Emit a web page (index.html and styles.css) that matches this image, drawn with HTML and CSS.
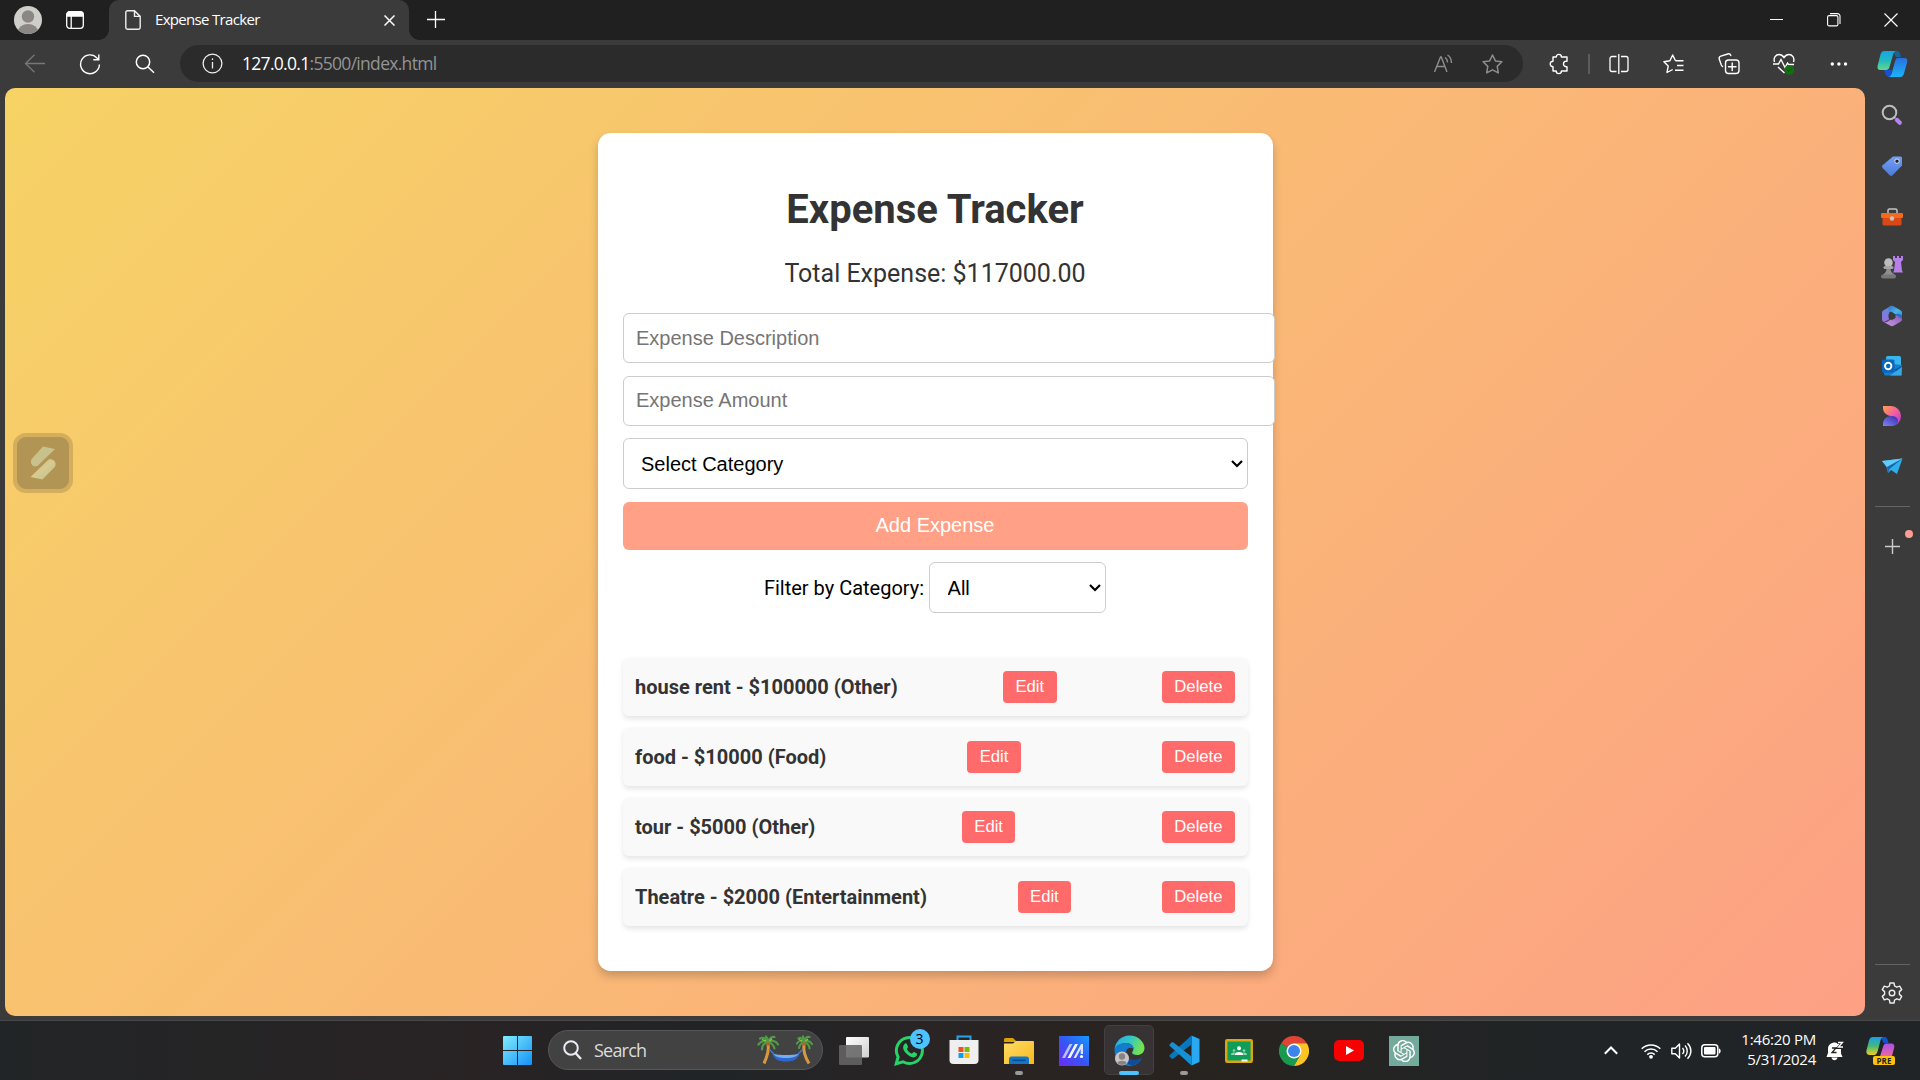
FILE: index.html
```html
<!DOCTYPE html>
<html lang="en">
<head>
<meta charset="utf-8">
<title>Expense Tracker</title>
<link rel="stylesheet" href="styles.css">
</head>
<body>
<div class="desktop">

  <header class="titlebar">
    <div class="cell profile"><svg width="28" height="28" viewBox="0 0 28 28"><defs><clipPath id="av"><circle cx="14" cy="14" r="14"/></clipPath></defs><g clip-path="url(#av)"><rect width="28" height="28" fill="#d0cecb"/><circle cx="14" cy="10.5" r="6.2" fill="#8b8784"/><ellipse cx="14" cy="25.500" rx="10" ry="7.500" fill="#8b8784"/></g></svg></div>
    <div class="cell workspaces"><svg width="18" height="18" viewBox="0 0 18 18" fill="none" stroke="#fff" stroke-width="1.300"><rect x=".7" y=".7" width="16.600" height="16.600" rx="3"/><path d="M1 3.500a2.500 2.500 0 0 1 2.500-2.500h11A2.500 2.500 0 0 1 17 3.500V5H1z" fill="#fff"/><path d="M5.200 5v12"/></svg></div>
    <div class="tab">
      <svg class="tab-icon" width="16" height="20" viewBox="0 0 16 20" fill="none" stroke="#eee" stroke-width="1.400"><path d="M2.500.8H9.500L15.200 6.400V17.500a1.700 1.700 0 0 1-1.700 1.700h-11A1.700 1.700 0 0 1 .8 17.500v-15A1.700 1.700 0 0 1 2.500.8zM9.500.8V6.400h5.700"/></svg>
      <span class="tab-title">Expense Tracker</span>
      <svg class="tab-close" width="11" height="11" viewBox="0 0 11 11" stroke="#fff" stroke-width="1.500"><path d="M.5.5l10 10M10.500.5l-10 10"/></svg>
    </div>
    <div class="cell newtab"><svg width="18" height="18" viewBox="0 0 18 18" stroke="#fff" stroke-width="1.300"><path d="M0 8.500h18M8.500 0v17"/></svg></div>
    <div class="window-controls">
      <svg width="14" height="14" viewBox="0 0 14 14" stroke="#fff"><path d="M0 6.500h13"/></svg>
      <svg width="14" height="14" viewBox="0 0 14 14" fill="none" stroke="#fff" stroke-width="1.100"><rect x=".6" y="2.600" width="10.300" height="10.300" rx="1.500"/><path d="M3 .6h7.500a2.500 2.500 0 0 1 2.500 2.500V11"/></svg>
      <svg width="14" height="14" viewBox="0 0 14 14" stroke="#fff" stroke-width="1.200"><path d="M.5.5l13 13M13.500.5l-13 13"/></svg>
    </div>
  </header>

  <nav class="toolbar">
    <div class="cell"><svg width="22" height="22" viewBox="0 0 22 22" fill="none" stroke="#777" stroke-width="1.300"><path d="M21 10.500H1.500M10.500 1.800L1.500 10.500l9 8.700"/></svg></div>
    <div class="cell"><svg width="22" height="22" viewBox="0 0 22 22" fill="none" stroke="#fff" stroke-width="1.400"><path d="M20.400 11.500A9.400 9.400 0 1 1 18 5l1.600 1.700M19.800 1.500v5.300h-5.500"/></svg></div>
    <div class="cell"><svg width="20" height="20" viewBox="0 0 20 20" fill="none" stroke="#fff" stroke-width="1.500"><circle cx="8" cy="8" r="6.700"/><path d="M13 13l6 5.800"/></svg></div>
    <div class="address">
      <svg class="info" width="21" height="21" viewBox="0 0 21 21" fill="none" stroke="#eee" stroke-width="1.300"><circle cx="10.500" cy="10.500" r="9.400"/><path d="M10.500 9v6.500"/><circle cx="10.500" cy="6.200" r=".6" fill="#eee" stroke="none"/><path d="M10.500 5.500v1.500"/></svg>
      <span class="url"><b>127.0.0.1</b>:5500/index.html</span>
      <svg class="read" width="22" height="20" viewBox="0 0 22 20" fill="none" stroke="#8d8d8d" stroke-width="1.400"><path d="M1.500 18L7.500 3h.8L14 18M3.700 12.500h8.200M12 3.500c1.700 1 2.500 2.800 2.500 5M14.500 1c2.800 1.700 4 4.500 4 8"/></svg>
      <svg class="fav" width="21" height="20" viewBox="0 0 21 20" fill="none" stroke="#8d8d8d" stroke-width="1.500" stroke-linejoin="round"><path d="M10.500 1l2.900 5.900 6.500.9-4.700 4.600 1.100 6.500-5.800-3.100-5.800 3.100 1.100-6.500L1.100 7.800l6.500-.9z"/></svg>
    </div>
    <div class="cell ext"><svg width="20" height="22" viewBox="0 0 20 22" fill="none" stroke="#fff" stroke-width="1.400" stroke-linejoin="round"><path d="M4 4h3.200a2.600 2.600 0 0 1 5.200 0H18v4.200a2.800 2.800 0 1 0 0 5.400V18h-5.600a2.600 2.600 0 0 1-5.200 0H4v-4.200a2.800 2.800 0 0 1 0-5.600z"/></svg></div>
    <div class="vsep"></div>
    <div class="cell"><svg width="20" height="20" viewBox="0 0 20 20" fill="none" stroke="#fff" stroke-width="1.300"><path d="M7.500 2.500H3a2 2 0 0 0-2 2v11a2 2 0 0 0 2 2h4.500M12 2.500h5a2 2 0 0 1 2 2v11a2 2 0 0 1-2 2h-5M9.800 0v20"/></svg></div>
    <div class="cell"><svg width="22" height="20" viewBox="0 0 22 20" fill="none" stroke="#fff" stroke-width="1.400" stroke-linejoin="round"><path d="M12.500 6.800L9.700 1 6.900 6.800.9 7.700l4.300 4.400L4 18.500l5.700-3M12.500 6.800H20.500M14 11.500h6.500M12 16.200h8.500"/></svg></div>
    <div class="cell"><svg width="22" height="22" viewBox="0 0 22 22" fill="none" stroke="#fff" stroke-width="1.400" stroke-linecap="round"><path d="M4.500 13.500A4 4 0 0 1 3.300 12L1.300 6.200a2.400 2.400 0 0 1 1.500-3l7-2.200a2.400 2.400 0 0 1 3 1.500"/><rect x="7.500" y="7" width="13.500" height="13.500" rx="3"/><path d="M14.200 10v7.500M10.500 13.800h7.500"/></svg></div>
    <div class="cell"><svg width="22" height="22" viewBox="0 0 22 22" fill="none" stroke="#fff" stroke-width="1.400"><path d="M1.500 9C0 4.500 3 1.500 6 1.500c2.500 0 4 1.500 5 3 1-1.500 2.500-3 5-3 3 0 6 3 4.500 7.500M0 11h5.500L8 6.500l4 8 2.500-4.500 1 1.500H21M5 14l6.500 6"/><circle cx="16.300" cy="17" r="4.800" fill="#11700f" stroke="none"/><path d="M14 17l1.700 1.600 3-3" stroke="#2b3b2b" stroke-width="1"/></svg></div>
    <div class="cell"><svg width="18" height="6" viewBox="0 0 18 6" fill="#fff"><circle cx="2.300" cy="3" r="1.700"/><circle cx="8.900" cy="3" r="1.700"/><circle cx="15.500" cy="3" r="1.700"/></svg></div>
    <div class="cell copilot"><svg width="31" height="28" viewBox="0 0 31 28"><defs><linearGradient id="c1" x1="0" y1="0" x2="0" y2="1"><stop offset="0" stop-color="#16a5e8"/><stop offset=".5" stop-color="#23b9c0"/><stop offset="1" stop-color="#66d68d"/></linearGradient><linearGradient id="c2" x1="0" y1="0" x2="0" y2="1"><stop offset="0" stop-color="#2a6fe0"/><stop offset="1" stop-color="#19b5fb"/></linearGradient></defs><path d="M16 1h4c2.500 0 3 2 4 6h-5z" fill="#15649a"/><path d="M7 20h8l-2 7c-4 0-4.500-3-6-7z" fill="#1551d8"/><path d="M7.500 1H19c-2 .5-2.500 2-3.200 4.500L12.500 17c-.7 2.200-1.600 3-3.500 3H4c-3.300 0-4-2-3.200-5L3.500 4.500C4.200 2 5.500 1 7.500 1z" fill="url(#c1)"/><path d="M21 8h6c3 0 3.800 2 3.100 4.500L27 23.500c-.8 2.500-2 3.500-4 3.500H11.500c2-.5 2.700-2 3.300-4L18 11.500C18.700 9 19.500 8 21 8z" fill="url(#c2)"/></svg></div>
  </nav>

  <section class="browser-body">
    <main class="page">
      <div class="floater"><svg width="26" height="34" viewBox="0 0 26 34"><defs><linearGradient id="fl" x1="0" y1="0" x2="1" y2="1"><stop offset="0" stop-color="#b6c08d"/><stop offset=".5" stop-color="#d8cb90"/><stop offset="1" stop-color="#b8c08e"/></linearGradient></defs><path d="M13 .5L25 3 8 19.500C4 22 .5 18.500 1 15.500c0-1.500.5-2.500 1.500-3.500z" fill="#c8c18b"/><path d="M18.500 13.500c4-1 7.500 2 7 5 0 1.300-.5 2.300-1.500 3.300L12.500 33.500.5 31z" fill="url(#fl)"/></svg></div>
      <div class="card">
        <h1>Expense Tracker</h1>
        <p class="total">Total Expense: $117000.00</p>
        <form class="entry">
          <input type="text" placeholder="Expense Description">
          <input type="text" placeholder="Expense Amount">
          <div class="select-wrap wide"><select><option>Select Category</option></select><svg class="chev" width="12" height="8" viewBox="0 0 12 8" fill="none" stroke="#000" stroke-width="2.200"><path d="M1 1l5 5 5-5"/></svg></div>
          <button type="button" class="add">Add Expense</button>
        </form>
        <div class="filter">
          <label>Filter by Category:</label>
          <div class="select-wrap"><select><option>All</option></select><svg class="chev" width="12" height="8" viewBox="0 0 12 8" fill="none" stroke="#000" stroke-width="2.200"><path d="M1 1l5 5 5-5"/></svg></div>
        </div>
        <ul class="expenses">
          <li><span>house rent - $100000 (Other)</span><button>Edit</button><button>Delete</button></li>
          <li><span>food - $10000 (Food)</span><button>Edit</button><button>Delete</button></li>
          <li><span>tour - $5000 (Other)</span><button>Edit</button><button>Delete</button></li>
          <li><span>Theatre - $2000 (Entertainment)</span><button>Edit</button><button>Delete</button></li>
        </ul>
      </div>
    </main>

    <aside class="sidebar">
      <div class="side-icon"><svg width="22" height="22" viewBox="0 0 22 22" fill="none"><path d="M16 16l2.800 2.800" stroke="#b782ee" stroke-width="4.200" stroke-linecap="round"/><path d="M12.500 12.500l2 2" stroke="#888" stroke-width="2"/><circle cx="8.500" cy="8.500" r="6.800" stroke="#bdbdbd" stroke-width="2"/></svg></div>
      <div class="side-icon"><svg width="22" height="22" viewBox="0 0 22 22"><defs><linearGradient id="tg" x1="0" y1="0" x2="0" y2="1"><stop offset="0" stop-color="#73a0f3"/><stop offset="1" stop-color="#4d7bd8"/></linearGradient></defs><path d="M12 1.500h7.500A1.500 1.500 0 0 1 21 3v7.500L11.500 20.200a2 2 0 0 1-2.800 0L1.600 13a2 2 0 0 1 0-2.700z" fill="url(#tg)"/><circle cx="16" cy="6.200" r="2.200" fill="#222" stroke="#dde8ff"/></svg></div>
      <div class="side-icon"><svg width="24" height="18" viewBox="0 1 24 18"><path d="M8 7V3.500A1.500 1.500 0 0 1 9.500 2h6A1.500 1.500 0 0 1 17 3.500V7" fill="none" stroke="#c5c5c5" stroke-width="1.500"/><path d="M2.500 10h19v7a1.500 1.500 0 0 1-1.500 1.500H4A1.500 1.500 0 0 1 2.500 17z" fill="#dc4815"/><rect x="1" y="6" width="22" height="5" rx="1" fill="#f46a1b"/><circle cx="12" cy="11.500" r="2.200" fill="#c3c3c3"/></svg></div>
      <div class="side-icon"><svg width="24" height="24" viewBox="0 0 24 24"><path d="M13 1h2v2h2V1h2v2h2V1h2v4l-2 2 1 8.500 1 2H13l1-2L15 7l-2-2z" fill="#b77fe9"/><path d="M2 22c0-3 4-3 4.500-8h4c.5 5 5.500 5 5.500 8z" fill="#8e8e8e"/><circle cx="8.500" cy="7.500" r="4.300" fill="#bcbcbc"/><rect x="3.500" y="11" width="10" height="3" rx="1.500" fill="#a5a5a5"/><rect x="1" y="19.500" width="15" height="4" rx="2" fill="#777"/></svg></div>
      <div class="side-icon"><svg width="22" height="22" viewBox="0 0 22 22"><defs><linearGradient id="m1" x1="0" y1="0" x2="0" y2="1"><stop offset="0" stop-color="#5a8be0"/><stop offset="1" stop-color="#9a6fd8"/></linearGradient><linearGradient id="m2" x1="0" y1="0" x2="1" y2="1"><stop offset="0" stop-color="#3a6fc4"/><stop offset=".5" stop-color="#47b6ea"/><stop offset="1" stop-color="#2f8fd8"/></linearGradient><linearGradient id="m3" x1="0" y1="1" x2="1" y2="0"><stop offset="0" stop-color="#cf9ae4"/><stop offset="1" stop-color="#8457b8"/></linearGradient></defs><path d="M9.500 1.200L2.500 5.200A3 3 0 0 0 1 7.800v6.500c0 2 1.500 3.200 3.200 2.300L8 14.500V6z" fill="url(#m1)"/><path d="M7.500 8V3.500C7.500 1.500 9.500 0 12 1l7.500 4.200A3 3 0 0 1 21 7.800v5c0 1-.8 1.500-1.800 1L12.500 8.500 10 6.500z" fill="url(#m2)"/><path d="M21 10.500v3.700a3 3 0 0 1-1.500 2.600l-7 4a3 3 0 0 1-3 0L3 17.300c2 .3 3.500-.5 5-1.800l6-3.200V9z" fill="url(#m3)"/><path d="M14 9.500l7 4.500v-4l-4-1.500z" fill="#2d6cc0"/><path d="M11 7.300l3.500 2v3.600L11 14.900l-3.500-2V9.300z" fill="#3b3b3b"/></svg></div>
      <div class="side-icon"><svg width="22" height="22" viewBox="0 0 22 22"><rect x="5" y="1" width="15" height="15" rx="1.500" fill="#37b6ee"/><path d="M3 12l9-3 9 1v9a1.500 1.500 0 0 1-1.500 1.500H5A2 2 0 0 1 3 19z" fill="#1480cb"/><path d="M21 10.500v9L13 15z" fill="#0c5da5"/><path d="M20.500 20.500H9L21 12z" fill="#35a9e5"/><rect x="1" y="4.500" width="12.500" height="13" rx="1.500" fill="#0b65bd"/><circle cx="7.200" cy="11" r="3.200" fill="none" stroke="#fff" stroke-width="1.900"/></svg></div>
      <div class="side-icon"><svg width="22" height="22" viewBox="0 0 22 22"><defs><linearGradient id="dg" x1="0" y1="0" x2="1" y2="1"><stop offset="0" stop-color="#ffa04b"/><stop offset=".5" stop-color="#f2609c"/><stop offset="1" stop-color="#b433e0"/></linearGradient><linearGradient id="dh" x1="0" y1="1" x2="1" y2="0"><stop offset="0" stop-color="#7d86f7"/><stop offset="1" stop-color="#3a2aa8"/></linearGradient></defs><path d="M2 1h8a10 10 0 0 1 10 10c0 4-2 7-5 8.800C17 16 14 11 10 11 5 10.500 2 7 2 3z" fill="url(#dg)"/><path d="M2 21v-2c0-4 3-8 8-8 4.500 0 7 2 7 5s-3 5-7 5z" fill="url(#dh)"/></svg></div>
      <div class="side-icon"><svg width="22" height="18" viewBox="0 0 22 18"><path d="M1 4L21.500 1.500 16 17l-6-4-3 3-1.500-6z" fill="#30aeea"/><path d="M1 4L21.500 1.500 6 10z" fill="#62cbf7"/><path d="M6 10L21.500 1.500 8.500 12 7 16z" fill="#1668ad"/></svg></div>
      <div class="hsep"></div>
      <div class="side-add"><svg width="15" height="15" viewBox="0 0 15 15" stroke="#ccc" stroke-width="1.400"><path d="M0 7.500h15M7.500 0v15"/></svg><i class="badge-dot"></i></div>
      <div class="side-bottom">
        <div class="hsep"></div>
        <svg width="22" height="22" viewBox="0 0 22 22" fill="none" stroke="#eee" stroke-width="1.400" stroke-linejoin="round"><path d="M9 1h4l.6 3 2.200 1.200 2.900-1 2 3.400-2.300 2V12.400l2.300 2-2 3.400-2.900-1-2.200 1.200-.6 3H9l-.6-3-2.200-1.200-2.900 1-2-3.400 2.300-2V9.600l-2.300-2 2-3.400 2.900 1L8.400 4z"/><circle cx="11" cy="11" r="2.800"/></svg>
      </div>
    </aside>
  </section>

  <footer class="taskbar">
    <div class="cell"><svg width="29" height="29" viewBox="0 0 29 29"><defs><linearGradient id="w" x1="0" y1="0" x2="1" y2="1"><stop offset="0" stop-color="#80edfd"/><stop offset="1" stop-color="#1491f7"/></linearGradient></defs><path d="M1 0h13v14H0V1a1 1 0 0 1 1-1zM15 0h13a1 1 0 0 1 1 1v13H15zM0 15h14v14H1a1 1 0 0 1-1-1zM15 15h14v13a1 1 0 0 1-1 1H15z" fill="url(#w)"/></svg></div>
    <div class="search">
      <svg class="search-icon" width="19" height="20" viewBox="0 0 19 20" fill="none" stroke="#eceaf2" stroke-width="2"><circle cx="8" cy="8" r="6.800"/><path d="M12.500 13l5.500 6" stroke-width="2.400"/></svg>
      <span>Search</span>
      <svg class="palms" width="56" height="30" viewBox="0 0 56 30" fill="none">
        <path d="M11 9c1.500 7-1 13-4 19.500M47 9c-1 7 1 13 5 19.500" stroke="#d9973f" stroke-width="3"/>
        <path d="M12 14L17 19M46 14L41 19" stroke="#537ad5" stroke-width="1.200"/>
        <path d="M15 18c5 2.500 9 2.500 14 2.500s9 0 14-2.500c-2 6-6 8.500-14 8.500S17 24 15 18z" fill="#2f67cf"/><path d="M16 18.500c4 2 22 2 26 0-3 3.500-6 4.500-13 4.500s-10-1-13-4.500z" fill="#70b0ef"/>
        <g stroke="#4f9a45" stroke-width="2.200" stroke-linecap="round"><path d="M11 7C7 5 4 6 1.500 9.500M11 7C9 3 6 2 3 3.500M11 7c1-4 4-5.500 6.500-5M11 7c4-2 8-1 10 2.500M11 7c-4 1-6 4-6 7.500M11 7c4 1.500 6 4 6.500 6.500M11 7C10.500 4 10 2.500 9 1.500"/></g>
        <g stroke="#4f9a45" stroke-width="2.200" stroke-linecap="round" transform="translate(36 0)"><path d="M11 7C7 5 5.500 6 4 8.500M11 7C9 3 7.500 2 5.500 3.500M11 7c1-4 3-5.500 5.500-5M11 7c4-2 6-1 8 2M11 7c-3 1-4.500 3.500-5 6M11 7c4 1.500 5.500 4 5.500 6.500M11 7C10.500 4 10.500 2.500 10 1.500"/></g>
        <path d="M5 4.500l4 1.500M15 3.500l-2.500 2.500M42 4.500l3 1.500M51 4l-2.500 2" stroke="#9ac34a" stroke-width="1.300"/><circle cx="11" cy="9" r="1.700" fill="#c45c22"/><circle cx="47" cy="9" r="1.700" fill="#c45c22"/>
      </svg>
    </div>
    <div class="cell"><svg width="30" height="28" viewBox="0 0 30 28"><defs><linearGradient id="tv" x1="0" y1="0" x2="1" y2="1"><stop offset="0" stop-color="#fff"/><stop offset="1" stop-color="#d0d0d0"/></linearGradient></defs><rect x="7" y="0" width="23" height="20.500" rx="1" fill="url(#tv)"/><rect x="0" y="8" width="23" height="20" rx="1" fill="#656565" opacity=".88"/></svg></div>
    <div class="cell whats"><svg width="31" height="31" viewBox="0 0 31 31"><path d="M2.200 28.800l1.900-6.900A13 13 0 1 1 9 26.800z" fill="none" stroke="#25d366" stroke-width="3"/><path d="M10.500 9c1-1 2-.8 2.600.5l.9 2.200c.3.800-1.300 1.800-1 2.500 1 2 2.500 3.500 4.600 4.400.8.300 1.700-1.800 2.500-1.500l2.400 1.200c1 .5.600 2.500-.5 3.300-3 2-7-.2-9.500-2.800S7.500 12.500 10.500 9z" fill="#25d366"/></svg><span class="count">3</span></div>
    <div class="cell store"><svg width="30" height="30" viewBox="0 0 30 30"><path d="M8.500 6V1.500h13V6" fill="none" stroke="#24a5ea" stroke-width="2"/><path d="M.5 5h29v20a4 4 0 0 1-4 4h-21a4 4 0 0 1-4-4z" fill="#efefef"/><rect x="9.500" y="12" width="5" height="5" fill="#f25022"/><rect x="15.500" y="12" width="5" height="5" fill="#7fba00"/><rect x="9.500" y="18" width="5" height="5" fill="#00a4ef"/><rect x="15.500" y="18" width="5" height="5" fill="#ffb900"/></svg></div>
    <div class="cell running"><svg width="30" height="28" viewBox="0 0 30 28"><defs><linearGradient id="fo" x1="0" y1="0" x2="1" y2="1"><stop offset="0" stop-color="#ffdc67"/><stop offset="1" stop-color="#f6b91c"/></linearGradient></defs><path d="M0 2.500A1.500 1.500 0 0 1 1.500 1H9l4 4H0z" fill="#dfa100"/><path d="M0 6.500h9L12 4h17a1 1 0 0 1 1 1v22H0z" fill="url(#fo)"/><path d="M5 27v-5a2.500 2.500 0 0 1 2.500-2.500h15A2.500 2.500 0 0 1 25 22v5z" fill="#1175c8"/><path d="M8.500 23.300h13" stroke="#0a4a94" stroke-width="1.500"/></svg></div>
    <div class="cell"><svg width="30" height="30" viewBox="0 0 30 30"><defs><linearGradient id="ma" x1="1" y1="0" x2="0" y2="1"><stop offset="0" stop-color="#1399ff"/><stop offset=".5" stop-color="#3656f5"/><stop offset="1" stop-color="#6a2bfb"/></linearGradient></defs><rect width="30" height="30" fill="url(#ma)"/><path d="M3 22L10.500 8h3L6 22z" fill="#fff" opacity=".65"/><path d="M8.500 22L16 8h3l-7.500 14z" fill="#fff" opacity=".95"/><path d="M14.500 22L22 8h2v10h-2.300v-5L17 22z" fill="#dce6ff"/><circle cx="22.500" cy="20.500" r="1.600" fill="#fff"/></svg></div>
    <div class="cell active"><svg width="31" height="31" viewBox="0 0 31 31"><defs><linearGradient id="ed" x1="0" y1="0" x2="1" y2=".3"><stop offset="0" stop-color="#25a9e6"/><stop offset=".5" stop-color="#2fc4cd"/><stop offset="1" stop-color="#73e251"/></linearGradient></defs><path d="M.5 15C1 7 7 .5 15.500.5S30.500 7 30.500 13c0 4.500-3.500 7-7.500 7-3 0-5-1-5-2.500 0-.8 1.500-1.500 1.500-4 0-3-3-5.500-7.500-5.500S1.500 11 .5 15z" fill="url(#ed)"/><path d="M.5 15C1.500 10 6 8 12 8c4.500 0 7.500 2.500 7.500 5.500-7-3-9 4-6 8.500 3 4 8 5 14 2-3 5-8 7-12 7C7 30.500.5 24 .5 15z" fill="#147ccc"/><path d="M13 15c-4 7 5 13 15 7.500-2 5-6 7.500-11 8-6-2-9-10-4-15.500z" fill="#104d99"/><circle cx="8" cy="23.500" r="7" fill="#c8c6c4"/><circle cx="8" cy="21.500" r="3.200" fill="#888481"/><path d="M3 28a5.500 4 0 0 1 10 0 7 7 0 0 1-10 0z" fill="#888481"/></svg></div>
    <div class="cell running"><svg width="31" height="31" viewBox="0 0 31 31"><path d="M22.500.5v30L30.500 27V4z" fill="#29a8f3"/><path d="M22.500.5v9L4.500 23.500c-.7.500-1.500.5-2 0L.8 21.700c-.5-.5-.5-1.300 0-1.800z" fill="#0877bd"/><path d="M22.500 30.500v-9L4.500 7.500c-.7-.5-1.500-.5-2 0L.8 9.300c-.5.500-.5 1.300 0 1.800z" fill="#168fd3"/></svg></div>
    <div class="cell"><svg width="28" height="24" viewBox="0 0 28 24"><rect x="1.200" y="1.200" width="25.600" height="21.600" rx="1" fill="#109d59" stroke="#dca511" stroke-width="2.400"/><circle cx="14" cy="9.300" r="2" fill="#fff"/><circle cx="9" cy="11.500" r="1.300" fill="#8ed1b1"/><circle cx="19" cy="11.500" r="1.300" fill="#8ed1b1"/><path d="M9.500 16c0-4 9-4 9 0z" fill="#fff"/><path d="M6 16c0-2.500 3-3 4-2l-1 2zM22 16c0-2.500-3-3-4-2l1 2z" fill="#8ed1b1"/><path d="M16.500 20.500h6V22.500h-6z" fill="#fff"/></svg></div>
    <div class="cell"><svg width="30" height="30" viewBox="0 0 30 30"><path d="M15 15L2 7.500A15 15 0 0 1 28 7.500z" fill="#e04435"/><path d="M2 7.500A15 15 0 0 0 15 30l6.500-11.300L15 15z" fill="#1a9950"/><path d="M28 7.500H15L21.500 18.700 15 30A15 15 0 0 0 28 7.500z" fill="#fbc422"/><circle cx="15" cy="15" r="7.500" fill="#fff"/><circle cx="15" cy="15" r="6" fill="#3c83ec"/></svg></div>
    <div class="cell"><svg width="30" height="21" viewBox="0 0 30 21"><rect width="30" height="21" rx="5" fill="#f90000"/><path d="M12 6v9l8-4.500z" fill="#fff"/></svg></div>
    <div class="cell"><svg width="30" height="30" viewBox="0 0 30 30"><rect width="30" height="30" fill="#74aa9c"/><path transform="translate(3.900 3.900) scale(.925)" fill="#fff" d="M22.2819 9.8211a5.9847 5.9847 0 0 0-.5157-4.9108 6.0462 6.0462 0 0 0-6.5098-2.9A6.0651 6.0651 0 0 0 4.9807 4.1818a5.9847 5.9847 0 0 0-3.9977 2.9 6.0462 6.0462 0 0 0 .7427 7.0966 5.98 5.98 0 0 0 .511 4.9107 6.051 6.051 0 0 0 6.5146 2.9001A5.9847 5.9847 0 0 0 13.2599 24a6.0557 6.0557 0 0 0 5.7718-4.2058 5.9894 5.9894 0 0 0 3.9977-2.9001 6.0557 6.0557 0 0 0-.7475-7.0729zm-9.022 12.6081a4.4755 4.4755 0 0 1-2.8764-1.0408l.1419-.0804 4.7783-2.7582a.7948.7948 0 0 0 .3927-.6813v-6.7369l2.02 1.1686a.071.071 0 0 1 .038.052v5.5826a4.504 4.504 0 0 1-4.4945 4.4944zm-9.6607-4.1254a4.4708 4.4708 0 0 1-.5346-3.0137l.142.0852 4.783 2.7582a.7712.7712 0 0 0 .7806 0l5.8428-3.3685v2.3324a.0804.0804 0 0 1-.0332.0615L9.74 19.9502a4.4992 4.4992 0 0 1-6.1408-1.6464zM2.3408 7.8956a4.485 4.485 0 0 1 2.3655-1.9728V11.6a.7664.7664 0 0 0 .3879.6765l5.8144 3.3543-2.0201 1.1685a.0757.0757 0 0 1-.071 0l-4.8303-2.7865A4.504 4.504 0 0 1 2.3408 7.872zm16.5963 3.8558L13.1038 8.364 15.1192 7.2a.0757.0757 0 0 1 .071 0l4.8303 2.7913a4.4944 4.4944 0 0 1-.6765 8.1042v-5.6772a.79.79 0 0 0-.407-.667zm2.0107-3.0231l-.142-.0852-4.7735-2.7818a.7759.7759 0 0 0-.7854 0L9.409 9.2297V6.8974a.0662.0662 0 0 1 .0284-.0615l4.8303-2.7866a4.4992 4.4992 0 0 1 6.6802 4.66zM8.3065 12.863l-2.02-1.1638a.0804.0804 0 0 1-.038-.0567V6.0742a4.4992 4.4992 0 0 1 7.3757-3.4537l-.142.0805L8.704 5.459a.7948.7948 0 0 0-.3927.6813zm1.0976-2.3654l2.602-1.4998 2.6069 1.4998v2.9994l-2.5974 1.4997-2.6067-1.4997Z"/></svg></div>
    <div class="tray">
      <svg class="t-chev" width="14" height="9" viewBox="0 0 14 9" fill="none" stroke="#fff" stroke-width="2"><path d="M.8 7.800L7 1.500l6.200 6.300"/></svg>
      <svg class="t-wifi" width="20" height="16" viewBox="0 0 20 16" fill="none" stroke="#fff" stroke-width="1.500"><path d="M.7 5.800a13.200 13.200 0 0 1 18.600 0M3.500 8.800a9.200 9.200 0 0 1 13 0M6.300 11.600a5.200 5.200 0 0 1 7.400 0"/><circle cx="10" cy="13.800" r="1.900" fill="#fff" stroke="none"/></svg>
      <svg class="t-vol" width="21" height="18" viewBox="0 0 21 18" fill="none" stroke="#fff" stroke-width="1.400" stroke-linejoin="round"><path d="M.8 6.200h3.500L8.500 2v14l-4.200-4.200H.8zM11.500 6c1.500 1.700 1.500 4.300 0 6M14 3.500c3 3 3 8 0 11M16.500 1.200c4.500 4.500 4.500 11.100 0 15.600"/></svg>
      <svg class="t-bat" width="20" height="14" viewBox="0 0 20 14"><rect x=".8" y=".8" width="16" height="12" rx="3" fill="none" stroke="#fff" stroke-width="1.500"/><rect x="3" y="3" width="11.500" height="7.600" rx="1" fill="#fff"/><path d="M18 4.500c2.200.5 2.200 4.500 0 5z" fill="#fff"/></svg>
      <div class="clock"><span class="time">1:46:20 PM</span><span>5/31/2024</span></div>
      <svg class="t-bell" width="18" height="20" viewBox="0 0 18 20"><path d="M2 8c0-4 3-6.500 7-6.500l4 1 2 4v6l1.500 3.500H.5L2 12zM5.500 16.500h6c-.5 3.500-5.500 3.500-6 0z" fill="#fff"/><path d="M6 7h4L6 11.500h4.500" fill="none" stroke="#222" stroke-width="1.300"/><path d="M11 1.200h6L12.500 6.500H17" fill="none" stroke="#222" stroke-width="3"/><path d="M12 1.500h4.500L12.500 6H17" fill="none" stroke="#fff" stroke-width="1.300"/></svg>
      <div class="t-cop"><svg width="29" height="29" viewBox="0 0 29 29"><defs><linearGradient id="p1" x1="0" y1="0" x2="0" y2="1"><stop offset="0" stop-color="#199df1"/><stop offset=".5" stop-color="#44ba75"/><stop offset="1" stop-color="#f2cc24"/></linearGradient><linearGradient id="p2" x1="0" y1="0" x2="0" y2="1"><stop offset="0" stop-color="#a951e6"/><stop offset="1" stop-color="#fb6d92"/></linearGradient></defs><path d="M15 1h3.500c2.500 0 3 2 4 6h-5z" fill="#1451cc"/><path d="M7 1h10c-1.500.5-2 2-2.700 4L12 14c-.7 3-2 5-4 5H4c-3.300 0-4.200-2-3.400-5L3 4.500C3.700 2 5 1 7 1z" fill="url(#p1)"/><path d="M20 7.500h5c3 0 3.800 2 3.100 4.500L26 20c-.8 2.500-2 3.500-4 3.500H11c2-.5 2.700-2 3.300-4L17 11c.7-2.500 1.500-3.500 3-3.500z" fill="url(#p2)"/></svg><span class="pre">PRE</span></div>
    </div>
  </footer>
</div>
</body>
</html>
```
FILE: styles.css
```css
* { box-sizing: border-box; }
body { margin: 0; overflow: hidden; background: #3b3b3b; }
svg { display: block; flex: none; }

.desktop {
  width: 1920px;
  height: 1080px;
  display: grid;
  grid-template-rows: 40px 48px 933px 59px;
  font-family: "Open Sans", "Noto Sans", sans-serif;
  color: #fff;
}

.cell {
  flex: none;
  width: 55px;
  height: 100%;
  display: flex;
  align-items: center;
  justify-content: center;
  position: relative;
}

/* Title bar */
.titlebar { display: flex; background: #202020; }
.profile { width: 56px; }
.workspaces { width: 38px; margin-right: 15px; }
.tab {
  position: relative;
  width: 300px;
  display: flex;
  align-items: center;
  padding: 0 14px 0 16px;
  background: #3b3b3b;
  border-radius: 10px 10px 0 0;
}
.tab::before, .tab::after {
  content: "";
  position: absolute;
  bottom: 0;
  width: 10px;
  height: 10px;
}
.tab::before { left: -10px; background: radial-gradient(circle at 0 0, transparent 9.5px, #3b3b3b 10px); }
.tab::after { right: -10px; background: radial-gradient(circle at 100% 0, transparent 9.5px, #3b3b3b 10px); }
.tab-title { margin-left: 14px; padding-bottom: 2px; font-size: 15px; letter-spacing: -0.68px; line-height: 20px; white-space: nowrap; }
.tab-close { margin-left: auto; }
.newtab { width: 54px; }
.window-controls { margin-left: auto; display: flex; align-items: center; gap: 43px; padding-right: 22px; }

/* Toolbar */
.toolbar { display: flex; background: #3b3b3b; padding-left: 7.5px; }
.address {
  flex: none;
  width: 1343px;
  height: 37px;
  margin: 5px 8.5px 0 7.5px;
  padding: 0 20px 0 22px;
  display: flex;
  align-items: center;
  border-radius: 19px;
  background: #2b2b2b;
}
.url { margin-left: 19px; padding-bottom: 1px; font-size: 17.5px; letter-spacing: -0.7px; color: #949494; white-space: nowrap; }
.url b { font-weight: 400; color: #fff; }
.read { margin-left: auto; }
.fav { margin-left: 27px; }
.vsep { width: 2px; height: 20px; margin: 14px 2px 0 1px; background: #5c5c5c; }
.copilot { width: 51px; }

/* Browser body */
.browser-body { display: flex; background: #3b3b3b; border-bottom: 1px solid #474747; }
.page {
  position: relative;
  flex: none;
  width: 1860px;
  height: 928px;
  margin-left: 5px;
  padding-top: 45px;
  border-radius: 10px;
  background: linear-gradient(135deg, #f6d365 0%, #fda085 100%);
}
.floater {
  position: absolute;
  left: 8px;
  top: 345px;
  width: 60px;
  height: 60px;
  display: flex;
  align-items: center;
  justify-content: center;
  border: 4px solid #d2ae5d;
  border-radius: 13px;
  background: #b29455;
}

/* Expense card */
.card {
  width: 675px;
  height: 838px;
  margin: 0 auto;
  padding: 25px;
  border-radius: 12.5px;
  background: #fff;
  box-shadow: 0 5px 10px rgba(0, 0, 0, 0.2);
  font-family: Roboto, sans-serif;
  font-size: 20px;
  color: #000;
  text-align: center;
}
h1 { margin: 28px 0 25px; font-size: 40px; line-height: 47px; color: #333; }
.total { margin: 0 0 24px; font-size: 25px; line-height: 31px; color: #333; }
.entry { display: flex; flex-direction: column; align-items: flex-start; gap: 12.5px; margin-bottom: 12.5px; }
.entry input, .select-wrap select, .add, .expenses button { font-family: "Liberation Sans", Arial, sans-serif; }
.entry input {
  box-sizing: content-box;
  width: 100%;
  height: 23px;
  padding: 12.5px;
  border: 1px solid #ccc;
  border-radius: 6px;
  font-size: 20px;
}
.entry input::placeholder { color: #757575; }
.select-wrap { position: relative; width: 177px; }
.select-wrap.wide { width: 100%; }
.select-wrap select {
  display: block;
  width: 100%;
  height: 51px;
  padding: 0 17.5px;
  appearance: none;
  border: 1px solid #ccc;
  border-radius: 6px;
  background: #fff;
  font-size: 20px;
  color: #000;
}
.chev { position: absolute; right: 5px; top: 22px; }
.add { width: 100%; height: 48px; padding: 0; border: 0; border-radius: 6px; background: #ffa087; color: #fff; font-size: 20px; }
.filter { display: flex; align-items: center; justify-content: center; gap: 5px; margin-bottom: 45px; }
.expenses { margin: 0; padding: 0; list-style: none; display: grid; gap: 12px; }
.expenses li {
  height: 58px;
  padding: 0 12.5px;
  display: flex;
  align-items: center;
  justify-content: space-between;
  border-radius: 6px;
  background: #f9f9f9;
  box-shadow: 0 2.5px 5px rgba(0, 0, 0, 0.1);
  font-weight: 700;
  color: #333;
}
.expenses button { height: 32px; padding: 0 12.5px 1px; border: 0; border-radius: 4px; background: #ff6b6b; color: #fff; font-size: 16.667px; }

/* Edge sidebar */
.sidebar { flex: 1; display: flex; flex-direction: column; align-items: center; padding: 2px 1px 0 0; }
.side-icon { height: 50.2px; display: flex; align-items: center; }
.side-icon:nth-child(2), .side-icon:nth-child(4) { padding-top: 2px; }
.side-icon:nth-child(3) { padding-top: 3px; }
.hsep { flex: none; width: 35px; height: 1px; background: #646464; }
.sidebar > .hsep { margin-top: 14px; }
.side-add { position: relative; margin-top: 32px; }
.badge-dot { position: absolute; left: 20px; top: -9px; width: 8px; height: 8px; border-radius: 50%; background: #ff9d96; }
.side-bottom { margin-top: auto; padding-bottom: 16px; display: flex; flex-direction: column; align-items: center; gap: 17px; }

/* Taskbar */
.taskbar { display: flex; padding-left: 489.5px; background: linear-gradient(90deg, #222527, #292324 25%, #202427 37%, #2a2425 48%, #28231f 62%, #202426 80%, #202426); }
.search {
  flex: none;
  width: 275px;
  height: 40px;
  margin: 9px 3.500px 0;
  padding: 0 9px 0 14px;
  display: flex;
  align-items: center;
  border: 1px solid #575758;
  border-radius: 20px;
  background: #424243;
}
.search span { margin: 0 auto 0 12px; font-size: 18px; letter-spacing: -0.8px; color: #dcdcdc; }
.count {
  position: absolute;
  left: 28px;
  top: 8px;
  width: 20px;
  height: 20px;
  border-radius: 50%;
  background: #4cc2ff;
  color: #000;
  font-size: 14px;
  line-height: 20px;
  text-align: center;
}
.store { padding: 0 1px 1px 0; }
.running::after, .active::after {
  content: "";
  position: absolute;
  left: 50%;
  bottom: 5px;
  width: 8px;
  height: 4px;
  margin-left: -4px;
  border-radius: 2px;
  background: #9a9a9a;
}
.active::before {
  content: "";
  position: absolute;
  inset: 4px 3px 5px 2px;
  border: 1px solid #434040;
  border-radius: 5px;
  background: #373334;
}
.active svg { position: relative; }
.active::after { width: 20px; margin-left: -10px; background: #4cc2ff; }
.tray { margin-left: auto; display: flex; align-items: center; padding-right: 25px; }
.t-chev { margin-right: 23px; }
.t-wifi { margin-right: 10px; }
.t-vol { margin-right: 9px; }
.t-bat { margin-right: 20px; }
.clock { width: 76px; padding: 0 1px 3px 0; display: flex; flex-direction: column; align-items: flex-end; font-size: 15px; line-height: 20px; letter-spacing: -0.25px; white-space: nowrap; }
.t-bell { margin: 0 22px 0 9px; }
.t-cop { position: relative; }
.pre { position: absolute; left: 7px; bottom: 0; width: 22px; height: 9px; border-radius: 2px; background: #ffc20d; color: #222; font-size: 8px; line-height: 9px; font-weight: 700; text-align: center; }
```
